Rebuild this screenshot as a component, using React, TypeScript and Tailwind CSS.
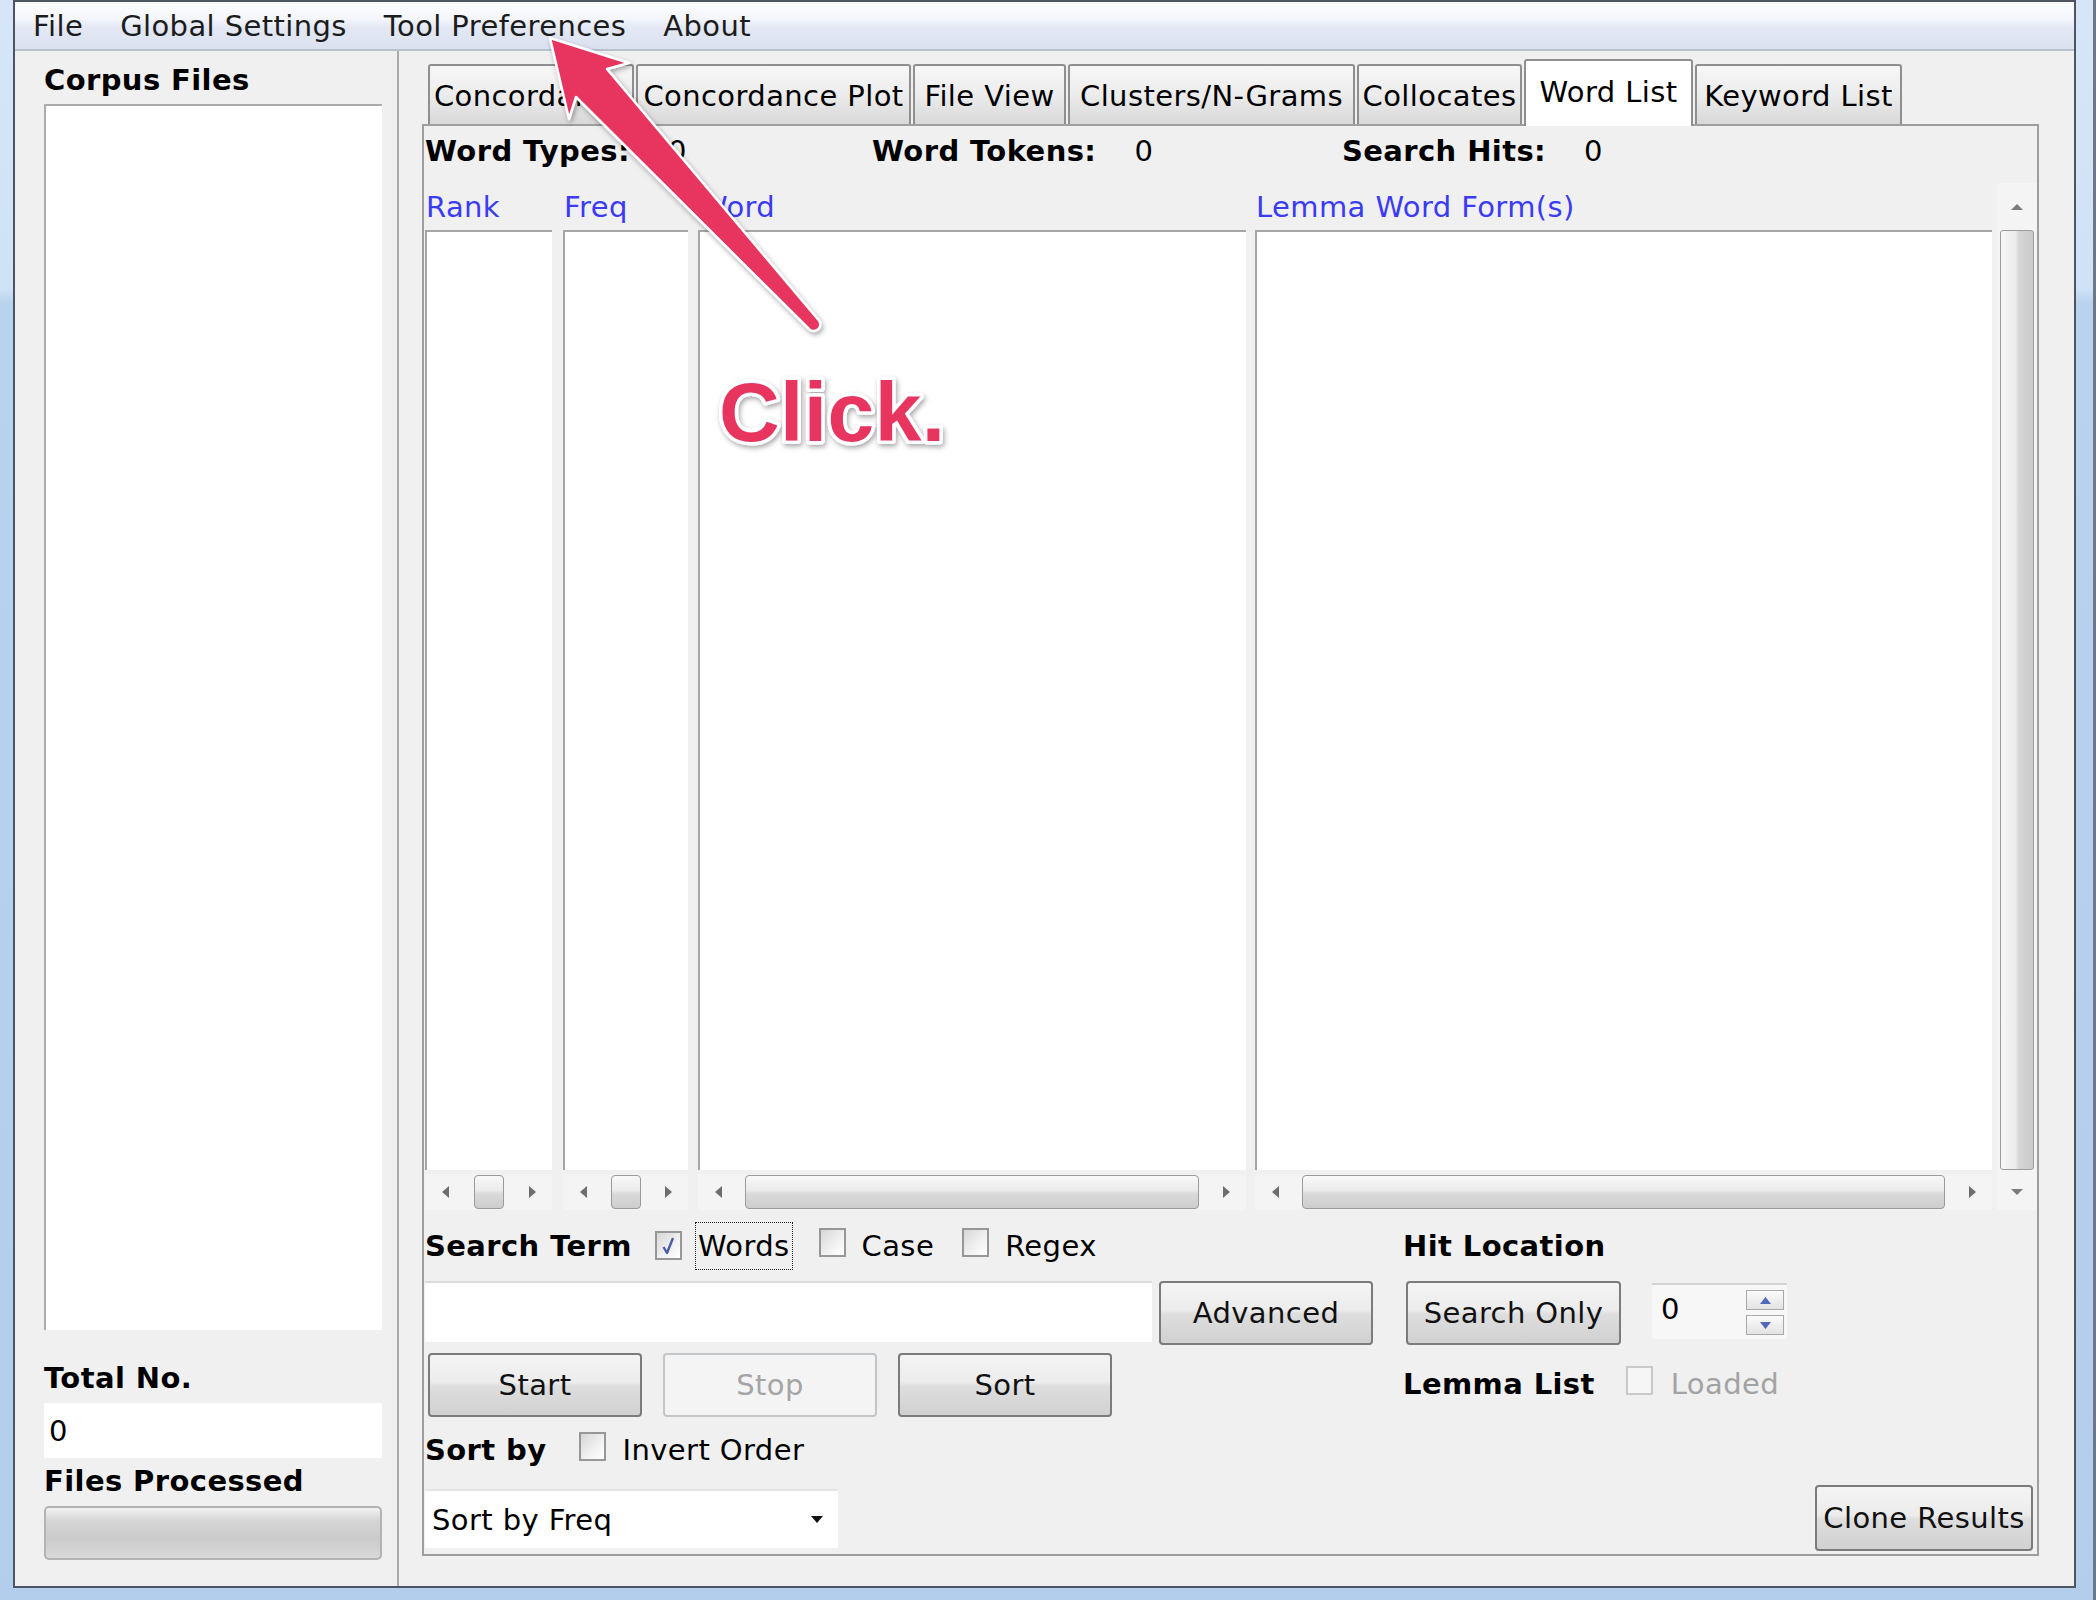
import React from "react";

type Dir = "l" | "r" | "u" | "d";

function Tri({ dir, color = "#6e6e6e", w = 7, h = 12 }: { dir: Dir; color?: string; w?: number; h?: number }) {
  let pts = "";
  if (dir === "l") pts = `${w},0 0,${h / 2} ${w},${h}`;
  if (dir === "r") pts = `0,0 ${w},${h / 2} 0,${h}`;
  if (dir === "u") pts = `0,${h} ${w / 2},0 ${w},${h}`;
  if (dir === "d") pts = `0,0 ${w},0 ${w / 2},${h}`;
  return (
    <svg width={w} height={h} viewBox={`0 0 ${w} ${h}`}>
      <polygon points={pts} fill={color} />
    </svg>
  );
}

function Checkbox({ checked = false, disabled = false }: { checked?: boolean; disabled?: boolean }) {
  return (
    <span
      className={`inline-flex h-[29px] w-[27px] shrink-0 items-center justify-center border-2 ${
        disabled
          ? "border-[#c9c9c9] bg-[#f6f6f6]"
          : "border-[#979797] bg-[linear-gradient(135deg,#d6d6d6,#f2f2f2_60%,#ffffff)]"
      }`}
    >
      {checked && (
        <svg width="15" height="21" viewBox="0 0 15 21">
          <path d="M2.5 12 L6 18 L12 3" stroke="#4b5ea3" strokeWidth="2.4" fill="none" strokeLinejoin="round" />
        </svg>
      )}
    </span>
  );
}

function Btn({ children, className = "", disabled = false }: { children: React.ReactNode; className?: string; disabled?: boolean }) {
  return (
    <div
      className={`flex shrink-0 items-center justify-center rounded-[4px] border-2 ${
        disabled
          ? "border-[#c3c6c8] bg-[#f4f4f4] text-[#a4a4a4]"
          : "border-[#7b7b7b] bg-[linear-gradient(to_bottom,#f4f4f4_0%,#ececec_45%,#dedede_52%,#d0d0d0_100%)] text-[#111]"
      } ${className}`}
    >
      {children}
    </div>
  );
}

function HScroll({ small = false }: { small?: boolean }) {
  return (
    <div className="mt-[4px] flex h-[36px] shrink-0 items-center bg-[#f4f4f4]">
      <div className="flex h-full w-[40px] shrink-0 items-center justify-center">
        <Tri dir="l" />
      </div>
      <div className="flex h-full flex-1 items-center justify-center px-[7px]">
        <div
          className={`h-[34px] rounded-[4px] border border-[#9a9a9a] bg-[linear-gradient(to_bottom,#f8f8f8,#ebebeb_45%,#d9d9d9_55%,#cdcdcd)] ${
            small ? "w-[30px]" : "w-full"
          }`}
        />
      </div>
      <div className="flex h-full w-[40px] shrink-0 items-center justify-center">
        <Tri dir="r" />
      </div>
    </div>
  );
}

function Col({ title, className, small = false }: { title: string; className: string; small?: boolean }) {
  return (
    <div className={`flex shrink-0 flex-col ${className}`}>
      <div className="flex h-[47px] items-center whitespace-nowrap pl-[1px] text-[#3b3bf5]">{title}</div>
      <div className="flex-1 border-l-2 border-t-2 border-[#a6a6a6] bg-white" />
      <HScroll small={small} />
    </div>
  );
}

function Tab({ label, className, selected = false }: { label: string; className: string; selected?: boolean }) {
  return (
    <div
      className={`flex shrink-0 items-center justify-center whitespace-nowrap rounded-t-[3px] border-2 border-b-0 border-[#8f8f8f] ${
        selected
          ? "relative z-10 -mb-[2px] h-[67px] bg-white pb-[4px]"
          : "h-[60px] bg-[linear-gradient(to_bottom,#f7f7f7,#ececec_50%,#d8d8d8)] pt-[2px]"
      } ${className}`}
    >
      {label}
    </div>
  );
}

export default function App() {
  return (
    <div className="relative flex h-[1600px] w-[2096px] overflow-hidden bg-[linear-gradient(to_bottom,#d6e6f8_0%,#d0e2f6_18%,#b9d2ee_19%,#b3cdec_100%)] font-['DejaVu_Sans',sans-serif] text-[29px] leading-[34px] tracking-[0.4px] text-black">
      <div className="w-[13px] shrink-0" />
      {/* window */}
      <div className="flex h-[1588px] w-[2063px] shrink-0 flex-col border-2 border-[#4d5563] bg-[#f0f0f0]">
        {/* menu bar */}
        <div className="flex h-[49px] shrink-0 items-center gap-[37px] border-b-2 border-[#b9c0cf] bg-[linear-gradient(to_bottom,#fdfdfe_0%,#f4f6fb_35%,#e3e8f4_55%,#dbe1f0_100%)] pl-[18px] text-[#1c1c1c]">
          <span>File</span>
          <span>Global Settings</span>
          <span>Tool Preferences</span>
          <span>About</span>
        </div>

        <div className="flex min-h-0 flex-1">
          {/* left panel */}
          <div className="flex w-[382px] shrink-0 flex-col pb-[26px] pl-[29px] pr-[15px] pt-[12px]">
            <div className="h-[34px] font-bold">Corpus Files</div>
            <div className="mt-[7px] flex-1 border-l-2 border-t-2 border-[#ababab] bg-white" />
            <div className="mt-[31px] h-[34px] font-bold">Total No.</div>
            <div className="mt-[8px] flex h-[55px] items-center bg-white pl-[5px]">0</div>
            <div className="mt-[6px] h-[34px] font-bold">Files Processed</div>
            <div className="mt-[8px] h-[54px] rounded-[5px] border-2 border-[#b3b3b3] bg-[linear-gradient(to_bottom,#f2f2f2_0%,#d6d6d6_25%,#cbcbcb_60%,#d9d9d9_100%)]" />
          </div>

          {/* right panel */}
          <div className="flex flex-1 flex-col border-l-2 border-[#aaaaaa] pb-[30px] pl-[23px] pr-[35px] pt-[8px]">
            <div className="flex h-[65px] shrink-0 items-end gap-[2px] pl-[6px]">
              <Tab label="Concordance" className="w-[206px]" />
              <Tab label="Concordance Plot" className="w-[275px]" />
              <Tab label="File View" className="w-[153px]" />
              <Tab label="Clusters/N-Grams" className="w-[287px]" />
              <Tab label="Collocates" className="w-[165px]" />
              <Tab label="Word List" className="w-[169px]" selected />
              <Tab label="Keyword List" className="w-[207px]" />
            </div>

            <div className="flex flex-1 flex-col border-2 border-[#9e9e9e] pl-[1px]">
              {/* stats */}
              <div className="flex h-[57px] shrink-0 pt-[8px]">
                <div className="flex w-[447px] shrink-0">
                  <span className="font-bold">Word Types:</span>
                  <span className="ml-[38px]">0</span>
                </div>
                <div className="flex w-[470px] shrink-0">
                  <span className="font-bold">Word Tokens:</span>
                  <span className="ml-[38px]">0</span>
                </div>
                <div className="flex">
                  <span className="font-bold">Search Hits:</span>
                  <span className="ml-[38px]">0</span>
                </div>
              </div>

              {/* columns */}
              <div className="flex h-[1027px] shrink-0">
                <Col title="Rank" className="w-[127px]" small />
                <Col title="Freq" className="ml-[11px] w-[125px]" small />
                <Col title="Word" className="ml-[10px] w-[548px]" />
                <Col title="Lemma Word Form(s)" className="ml-[9px] w-[737px]" />
                <div className="ml-[5px] flex w-[40px] shrink-0 flex-col bg-[#f4f4f4]">
                  <div className="flex h-[47px] items-center justify-center">
                    <Tri dir="u" w={12} h={6} color="#7b7b7b" />
                  </div>
                  <div className="mx-[3px] flex-1 rounded-[3px] border border-[#9c9c9c] bg-[linear-gradient(to_right,#f7f7f7,#ececec_45%,#d6d6d6_55%,#c9c9c9)]" />
                  <div className="mt-[4px] flex h-[36px] items-center justify-center">
                    <Tri dir="d" w={12} h={6} color="#7b7b7b" />
                  </div>
                </div>
              </div>

              {/* lower area */}
              <div className="flex flex-1">
                <div className="flex w-[978px] shrink-0 flex-col">
                  <div className="mt-[19px] flex h-[34px] items-center">
                    <span className="font-bold">Search Term</span>
                    <span className="ml-[23px]">
                      <Checkbox checked />
                    </span>
                    <span className="ml-[13px] border border-dotted border-[#222] px-[2px] py-[6px]">Words</span>
                    <span className="ml-[26px]">
                      <Checkbox />
                    </span>
                    <span className="ml-[16px]">Case</span>
                    <span className="ml-[28px]">
                      <Checkbox />
                    </span>
                    <span className="ml-[16px]">Regex</span>
                  </div>
                  <div className="mt-[18px] flex h-[64px]">
                    <div className="h-[61px] w-[727px] border-t-2 border-[#dcdcdc] bg-white" />
                    <Btn className="ml-[7px] h-[64px] w-[214px]">Advanced</Btn>
                  </div>
                  <div className="mt-[8px] flex h-[64px]">
                    <Btn className="ml-[3px] h-[64px] w-[214px]">Start</Btn>
                    <Btn className="ml-[21px] h-[64px] w-[214px]" disabled>
                      Stop
                    </Btn>
                    <Btn className="ml-[21px] h-[64px] w-[214px]">Sort</Btn>
                  </div>
                  <div className="mt-[16px] flex h-[34px] items-center">
                    <span className="font-bold">Sort by</span>
                    <span className="ml-[32px]">
                      <Checkbox />
                    </span>
                    <span className="ml-[17px]">Invert Order</span>
                  </div>
                  <div className="mt-[22px] flex h-[59px] w-[413px] items-center justify-between border-t-2 border-[#e4e4e4] bg-white pl-[7px] pr-[15px]">
                    <span>Sort by Freq</span>
                    <Tri dir="d" w={12} h={7} color="#111" />
                  </div>
                </div>

                <div className="flex flex-1 flex-col">
                  <div className="mt-[19px] h-[34px] font-bold">Hit Location</div>
                  <div className="mt-[18px] flex h-[64px] items-start">
                    <Btn className="ml-[3px] h-[64px] w-[215px]">Search Only</Btn>
                    <div className="ml-[31px] mt-[2px] flex h-[56px] w-[135px] border-t-2 border-[#d4d4d4] bg-[#f7f7f7]">
                      <div className="flex flex-1 items-center pb-[6px] pl-[9px]">0</div>
                      <div className="flex flex-col gap-[5px] pr-[3px] pt-[5px]">
                        <div className="flex h-[20px] w-[38px] items-center justify-center border border-[#a9a9a9] bg-[linear-gradient(to_bottom,#fbfbfb,#e3e3e3)]">
                          <Tri dir="u" w={11} h={7} color="#5268b8" />
                        </div>
                        <div className="flex h-[20px] w-[38px] items-center justify-center border border-[#a9a9a9] bg-[linear-gradient(to_bottom,#fbfbfb,#e3e3e3)]">
                          <Tri dir="d" w={11} h={7} color="#5268b8" />
                        </div>
                      </div>
                    </div>
                  </div>
                  <div className="mt-[22px] flex h-[34px] items-center">
                    <span className="font-bold">Lemma List</span>
                    <span className="ml-[31px]">
                      <Checkbox disabled />
                    </span>
                    <span className="ml-[18px] text-[#a3a3a3]">Loaded</span>
                  </div>
                  <div className="flex-1" />
                  <Btn className="mb-[3px] mr-[4px] h-[66px] w-[218px] self-end whitespace-nowrap">Clone Results</Btn>
                </div>
              </div>
            </div>
          </div>
        </div>
      </div>
      <div className="flex-1 border-r-[3px] border-[#6d7787]" />

      {/* annotation overlay */}
      <svg className="pointer-events-none absolute left-0 top-0" width="2096" height="1600" viewBox="0 0 2096 1600">
        <defs>
          <filter id="sh" x="-20%" y="-20%" width="140%" height="140%">
            <feDropShadow dx="1.5" dy="2.5" stdDeviation="2.5" floodColor="#000" floodOpacity="0.35" />
          </filter>
        </defs>
        <path
          d="M550 38 L629 63 L607 69 L818.5 320 A6.2 6.2 0 0 1 809 329 L576 97 L569 119 Z"
          fill="#e8345e"
          stroke="#ffffff"
          strokeWidth="2.5"
          strokeLinejoin="round"
          filter="url(#sh)"
        />
        <text
          x="719"
          y="441"
          fontFamily="'Liberation Sans', Arial, sans-serif"
          fontWeight="bold"
          fontSize="84"
          fill="#e8345e"
          stroke="#ffffff"
          strokeWidth="7"
          strokeLinejoin="round"
          paintOrder="stroke"
          filter="url(#sh)"
        >
          Click.
        </text>
      </svg>
    </div>
  );
}
